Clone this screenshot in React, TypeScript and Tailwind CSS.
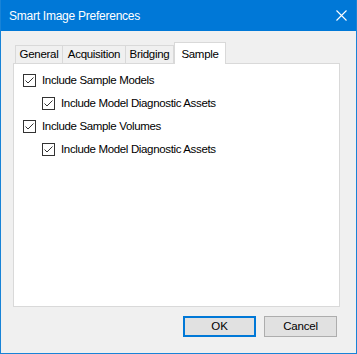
import React from "react";

function CheckBox({ label, indent }: { label: string; indent?: boolean }) {
  return (
    <div className={`flex items-center h-[23px] ${indent ? "pl-[19px]" : ""}`}>
      <span className="w-[13px] h-[13px] border border-[#333333] bg-white flex items-center justify-center">
        <svg width="11" height="11" viewBox="0 0 11 11" fill="none">
          <path d="M1.5 5.5 L4 8 L9.5 2.5" stroke="#333333" strokeWidth="1" />
        </svg>
      </span>
      <span className="ml-[6px] text-[11.5px] tracking-[-0.35px] text-black leading-none">{label}</span>
    </div>
  );
}

export default function App() {
  const tabs = ["General", "Acquisition", "Bridging"];
  const widths = ["w-[48px]", "w-[63px]", "w-[48px]"];
  return (
    <div
      className="w-[357px] h-[354px] flex flex-col border-x border-b border-[#1883d7] bg-[#f0f0f0]"
      style={{ fontFamily: '"Liberation Sans", Arial, sans-serif' }}
    >
      {/* Title bar */}
      <div className="h-[31px] bg-[#0078d7] flex items-center justify-between pl-[8px] pr-[9px] shrink-0">
        <span className="text-white text-[12px] tracking-[-0.25px]">Smart Image Preferences</span>
        <svg width="11" height="11" viewBox="0 0 11 11">
          <path d="M0.5 0.5 L10.5 10.5 M10.5 0.5 L0.5 10.5" stroke="#ffffff" strokeWidth="1.1" />
        </svg>
      </div>

      {/* Body */}
      <div className="flex-1 flex flex-col pl-[12px] pr-[16px] pt-[11px]">
        {/* Tab strip */}
        <div className="flex items-end h-[21px] pl-[2px]">
          {tabs.map((t, i) => (
            <div
              key={t}
              className={`${widths[i]} h-[18px] border border-b-0 ${i > 0 ? "border-l-0" : ""} border-[#d9d9d9] flex items-center justify-center text-[11.5px] tracking-[-0.3px] text-black`}
            >
              {t}
            </div>
          ))}
          <div className="relative z-10 w-[52px] h-[22px] -mb-px bg-white border border-b-0 border-[#d9d9d9] flex items-start justify-center pt-[3px] text-[11.5px] tracking-[-0.3px] text-black">
            Sample
          </div>
        </div>

        {/* Panel */}
        <div className="h-[244px] border border-[#d9d9d9] bg-white pt-[5px] pl-[9px]">
          <CheckBox label="Include Sample Models" />
          <CheckBox label="Include Model Diagnostic Assets" indent />
          <CheckBox label="Include Sample Volumes" />
          <CheckBox label="Include Model Diagnostic Assets" indent />
        </div>

        {/* Buttons */}
        <div className="flex justify-end gap-[8px] mt-[9px] pr-[3px]">
          <button className="w-[73px] h-[21px] bg-[#e1e1e1] border-2 border-[#0078d7] text-[11.5px] text-black">
            OK
          </button>
          <button className="w-[73px] h-[21px] bg-[#e1e1e1] border border-[#adadad] text-[11.5px] tracking-[-0.2px] text-black">
            Cancel
          </button>
        </div>
      </div>
    </div>
  );
}
